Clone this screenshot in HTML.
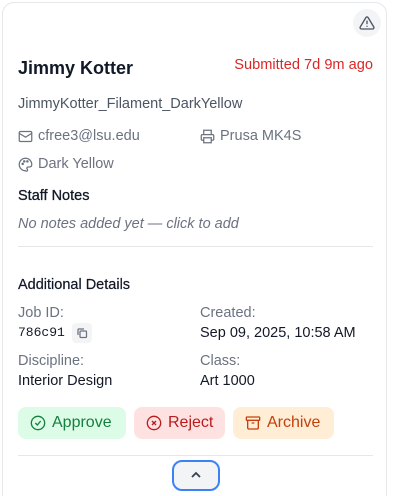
<!DOCTYPE html><html><head><style>
html,body{margin:0;width:400px;height:496px;overflow:hidden}
body{background:#fff;font-family:"Liberation Sans",sans-serif;position:relative}
.card{position:absolute;left:2px;top:2px;width:385px;height:494px;box-sizing:border-box;border:1px solid #e5e7eb;border-bottom:none;border-radius:12px 12px 0 0;background:#fff}
.a{position:absolute;white-space:nowrap}
.g{color:#6b7280}
svg{position:absolute}
.btn{position:absolute;top:407px;height:32px;border-radius:8px;font-size:16px;line-height:32px;box-sizing:border-box;padding-left:34px}
</style></head><body>
<div class="card"></div>
<div class="a" style="left:353px;top:9px;width:28px;height:28px;border-radius:50%;background:#f3f4f6"></div>
<svg style="left:359px;top:15px" width="16" height="16" viewBox="0 0 24 24" fill="none" stroke="#4b5563" stroke-width="2" stroke-linecap="round" stroke-linejoin="round"><path d="M10.3 3.9 1.8 18a2 2 0 0 0 1.7 3h17a2 2 0 0 0 1.7-3L13.7 3.9a2 2 0 0 0-3.4 0z"/><path d="M12 9v4M12 17h.01"/></svg>
<div class="a" style="left:18px;top:58px;font-size:18px;font-weight:bold;color:#111827">Jimmy Kotter</div>
<div class="a" style="right:27px;top:57px;font-size:14.6px;color:#dc2626">Submitted 7d 9m ago</div>
<div class="a" style="left:18px;top:96px;font-size:14.5px;color:#4b5563">JimmyKotter_Filament_DarkYellow</div>
<svg style="left:18px;top:129px" width="15" height="15" viewBox="0 0 24 24" fill="none" stroke="#6b7280" stroke-width="2"><rect x="2" y="4" width="20" height="16" rx="2"/><path d="m22 7-10 6L2 7"/></svg>
<div class="a g" style="left:38px;top:128px;font-size:14.5px">cfree3@lsu.edu</div>
<svg style="left:200px;top:129px" width="15" height="15" viewBox="0 0 24 24" fill="none" stroke="#6b7280" stroke-width="2"><path d="M6 9V2h12v7"/><path d="M6 18H4a2 2 0 0 1-2-2v-5a2 2 0 0 1 2-2h16a2 2 0 0 1 2 2v5a2 2 0 0 1-2 2h-2"/><rect x="6" y="14" width="12" height="8"/></svg>
<div class="a g" style="left:220px;top:128px;font-size:14.5px">Prusa MK4S</div>
<svg style="left:18px;top:157px" width="15" height="15" viewBox="0 0 24 24" fill="none" stroke="#6b7280" stroke-width="2"><path d="M12 22a10 10 0 1 1 10-10c0 3-2 4-4 4h-2a2 2 0 0 0-1 3.7A1.7 1.7 0 0 1 12 22z"/><circle cx="7.5" cy="11" r="1"/><circle cx="10" cy="7" r="1"/><circle cx="15" cy="7" r="1"/></svg>
<div class="a g" style="left:38px;top:156px;font-size:14.5px">Dark Yellow</div>
<div class="a" style="left:18px;top:188px;font-size:14.5px;color:#111827;-webkit-text-stroke:0.3px #111827">Staff Notes</div>
<div class="a g" style="left:18px;top:216px;font-size:14.5px;font-style:italic">No notes added yet — click to add</div>
<div class="a" style="left:18px;top:246px;width:355px;height:1px;background:#e5e7eb"></div>
<div class="a" style="left:18px;top:277px;font-size:14.5px;color:#111827;-webkit-text-stroke:0.2px #111827">Additional Details</div>
<div class="a g" style="left:18px;top:305px;font-size:14.5px">Job ID:</div>
<div class="a" style="left:18px;top:325px;font-size:13px;font-family:'Liberation Mono',monospace;color:#111827">786c91</div>
<div class="a" style="left:72px;top:323px;width:20px;height:20px;border-radius:4px;background:#f3f4f6"></div>
<svg style="left:76px;top:327px" width="12" height="12" viewBox="0 0 24 24" fill="none" stroke="#6b7280" stroke-width="2.5"><rect x="8" y="8" width="13" height="13" rx="2"/><path d="M4 16V5a2 2 0 0 1 1-1h11"/></svg>
<div class="a g" style="left:200px;top:305px;font-size:14.5px">Created:</div>
<div class="a" style="left:200px;top:325px;font-size:14.5px;color:#111827">Sep 09, 2025, 10:58 AM</div>
<div class="a g" style="left:18px;top:353px;font-size:14.5px">Discipline:</div>
<div class="a" style="left:18px;top:373px;font-size:14.5px;color:#111827">Interior Design</div>
<div class="a g" style="left:200px;top:353px;font-size:14.5px">Class:</div>
<div class="a" style="left:200px;top:373px;font-size:14.5px;color:#111827">Art 1000</div>
<div class="btn" style="left:18px;width:108px;background:#dcfce7;color:#15803d">Approve</div>
<svg style="left:30px;top:415px" width="16" height="16" viewBox="0 0 24 24" fill="none" stroke="#15803d" stroke-width="2"><circle cx="12" cy="12" r="10"/><path d="m8 12 3 3 5-6"/></svg>
<div class="btn" style="left:134px;width:91px;background:#fee2e2;color:#b91c1c">Reject</div>
<svg style="left:146px;top:415px" width="16" height="16" viewBox="0 0 24 24" fill="none" stroke="#b91c1c" stroke-width="2"><circle cx="12" cy="12" r="10"/><path d="m9 9 6 6M15 9l-6 6"/></svg>
<div class="btn" style="left:233px;width:101px;background:#ffedd5;color:#c2410c">Archive</div>
<svg style="left:245px;top:415px" width="16" height="16" viewBox="0 0 24 24" fill="none" stroke="#c2410c" stroke-width="2"><rect x="2" y="3" width="20" height="5" rx="1"/><path d="M4 8v11a2 2 0 0 0 2 2h12a2 2 0 0 0 2-2V8M10 12h4"/></svg>
<div class="a" style="left:18px;top:455px;width:355px;height:1px;background:#e5e7eb"></div>
<div class="a" style="left:172px;top:460px;width:48px;height:31px;box-sizing:border-box;border:2px solid #3b82f6;border-radius:10px;background:#f3f4f6"></div>
<svg style="left:190px;top:470px" width="12" height="10" viewBox="0 0 12 10" fill="none" stroke="#374151" stroke-width="1.8"><path d="m2 7 4-4 4 4"/></svg>
</body></html>
